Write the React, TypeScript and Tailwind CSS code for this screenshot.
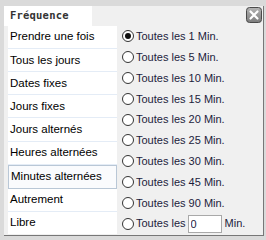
import { useState } from "react";

const modes = [
  "Prendre une fois",
  "Tous les jours",
  "Dates fixes",
  "Jours fixes",
  "Jours alternés",
  "Heures alternées",
  "Minutes alternées",
  "Autrement",
  "Libre",
];

const intervals = ["1", "5", "10", "15", "20", "25", "30", "45", "90"];

function Radio({ checked }: { checked: boolean }) {
  return (
    <svg width="12" height="12" viewBox="0 0 12 12" className="shrink-0">
      <circle cx="6" cy="6" r="5.5" fill="#fff" stroke="#333" strokeWidth="1" />
      {checked && <circle cx="6" cy="6" r="3" fill="#111" />}
    </svg>
  );
}

function CloseButton() {
  return (
    <svg width="16" height="16" viewBox="0 0 16 16">
      <defs>
        <linearGradient id="cb" x1="0" y1="0" x2="0" y2="1">
          <stop offset="0" stopColor="#b4b4b4" />
          <stop offset="1" stopColor="#7c7c7c" />
        </linearGradient>
      </defs>
      <rect x="0.5" y="0.5" width="15" height="15" rx="3" fill="url(#cb)" stroke="#4a4a4a" />
      <path d="M4.5 4.5 L11.5 11.5 M11.5 4.5 L4.5 11.5" stroke="#fff" strokeWidth="2.2" strokeLinecap="round" />
    </svg>
  );
}

export default function App() {
  const [mode, setMode] = useState(6);
  const [interval, setInterval] = useState(0);
  const [custom, setCustom] = useState("0");

  return (
    <div className="w-[266px] h-[240px] bg-[#dadada] pt-[6px] pl-[4px] font-['Liberation_Sans',Arial,sans-serif]">
      <div className="relative w-[260px] h-[230px] bg-[#f0f0f0] border-r border-b border-[#777]">
        {/* onglet */}
        <div className="h-[20px] w-[88px] bg-white pl-[6px] flex items-center">
          <span className="font-['DejaVu_Sans_Mono',monospace] font-bold text-[10.5px] text-[#333] tracking-[0.2px]">
            Fréquence
          </span>
        </div>
        <div className="absolute left-[242px] top-[1px]">
          <CloseButton />
        </div>

        <div className="flex h-[208px] pl-[4px] gap-[5px]">
          {/* liste des modes */}
          <div className="w-[109px] flex flex-col bg-white">
            {modes.map((m, i) => (
              <div
                key={m}
                onClick={() => setMode(i)}
                className={`flex-1 flex items-center pl-[2px] text-[11.5px] text-black border-b ${
                  i === mode
                    ? "border border-[#b9c7d6] bg-[#fafbfd] pl-[1px]"
                    : "border-[#e4ecf6]"
                } ${i === modes.length - 1 ? "border-b-0" : ""}`}
              >
                {m}
              </div>
            ))}
          </div>

          {/* intervalles */}
          <div className="flex-1 flex flex-col text-[11px] text-[#1c1c3c]">
            {intervals.map((v, i) => (
              <div
                key={v}
                onClick={() => setInterval(i)}
                className="flex-1 flex items-center gap-[2px]"
              >
                <Radio checked={interval === i} />
                <span>Toutes les {v} Min.</span>
              </div>
            ))}
            <div className="flex-1 flex items-center gap-[2px]" onClick={() => setInterval(9)}>
              <Radio checked={interval === 9} />
              <span>Toutes les</span>
              <input
                value={custom}
                onChange={(e) => setCustom(e.target.value)}
                className="w-[34px] h-[18px] bg-white border border-[#a9a9a9] px-[2px] text-[11px] text-[#1c1c3c] outline-none"
              />
              <span className="ml-[1px]">Min.</span>
            </div>
          </div>
        </div>
      </div>
    </div>
  );
}
